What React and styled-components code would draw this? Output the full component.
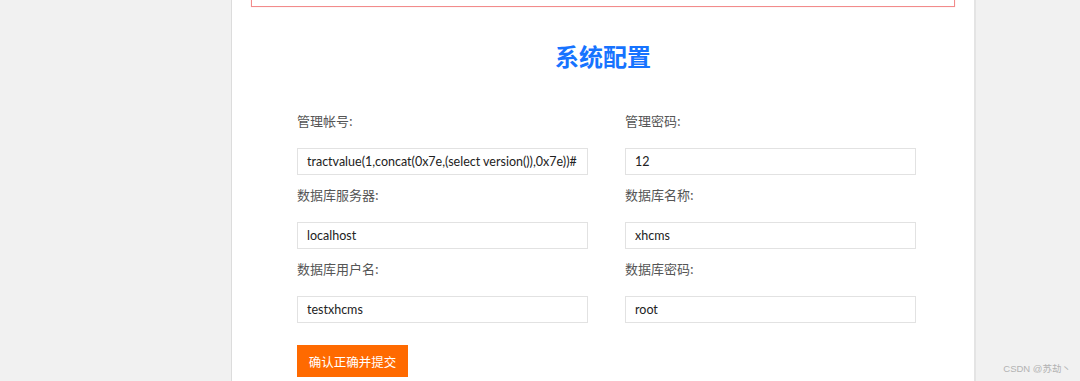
import React from "react";
import styled, { createGlobalStyle } from "styled-components";

const GlobalStyle = createGlobalStyle`
  html, body {
    margin: 0;
    padding: 0;
    background: #f1f1f1;
    font-family: "Open Sans", "Noto Sans CJK SC", sans-serif;
    overflow: hidden;
  }
`;

const Page = styled.div`
  position: relative;
  height: 381px;
  overflow: hidden;
`;

const Panel = styled.div`
  margin-left: 231px;
  width: 704px;
  min-height: 420px;
  background: #fff;
  border-left: 1px solid #dcdcdc;
  border-right: 2px solid #e4e4e4;
  padding: 0 19px;
`;

const Notice = styled.div`
  height: 30px;
  margin-top: -25px;
  border: 1px solid #f28b8b;
  box-shadow: 0 0 1px rgba(240, 120, 120, 0.4);
`;

const Title = styled.h2`
  margin: 33px 0 0;
  text-align: center;
  font-size: 24px;
  line-height: 32px;
  font-weight: 700;
  color: #1673ff;
  font-family: "Noto Sans CJK SC", sans-serif;
`;

const Form = styled.form`
  display: grid;
  grid-template-columns: 291px 291px;
  column-gap: 37px;
  row-gap: 10px;
  margin: 39px 0 0 46px;
`;

const Field = styled.div`
  display: flex;
  flex-direction: column;
`;

const Label = styled.label`
  font-size: 13px;
  line-height: 20px;
  color: #555;
  margin-bottom: 17px;
  font-family: "Noto Sans CJK SC", sans-serif;
`;

const InputBox = styled.div`
  height: 25px;
  border: 1px solid #e2e2e2;
  background: #fff;
  padding: 0 2px 0 9px;
  display: flex;
  align-items: center;
  overflow: hidden;
`;

const InputText = styled.div`
  white-space: nowrap;
  font-family: Lato, "Noto Sans CJK SC", sans-serif;
  font-size: 12.5px;
  color: #222;
`;

const Submit = styled.button`
  grid-column: 1 / 2;
  justify-self: start;
  margin-top: 12px;
  width: 111px;
  height: 32px;
  border: none;
  background: #ff6a00;
  color: #fff;
  font-size: 12.5px;
  font-family: "Noto Sans CJK SC", sans-serif;
  padding: 0;
`;

const Watermark = styled.div`
  position: absolute;
  right: 9px;
  bottom: 6px;
  font-size: 9.5px;
  color: #b3b3b3;
  font-family: "Liberation Sans", "Noto Sans CJK SC", sans-serif;
`;

const fields = [
  { label: "管理帐号:", value: "tractvalue(1,concat(0x7e,(select version()),0x7e))#" },
  { label: "管理密码:", value: "12" },
  { label: "数据库服务器:", value: "localhost" },
  { label: "数据库名称:", value: "xhcms" },
  { label: "数据库用户名:", value: "testxhcms" },
  { label: "数据库密码:", value: "root" },
];

const App = () => {
  return (
    <Page>
      <GlobalStyle />
      <Panel>
        <Notice />
        <Title>系统配置</Title>
        <Form onSubmit={(e) => e.preventDefault()}>
          {fields.map((f) => (
            <Field key={f.label}>
              <Label>{f.label}</Label>
              <InputBox>
                <InputText>{f.value}</InputText>
              </InputBox>
            </Field>
          ))}
          <Submit type="submit">确认正确并提交</Submit>
        </Form>
      </Panel>
      <Watermark>CSDN @苏劫丶</Watermark>
    </Page>
  );
};

export default App;
